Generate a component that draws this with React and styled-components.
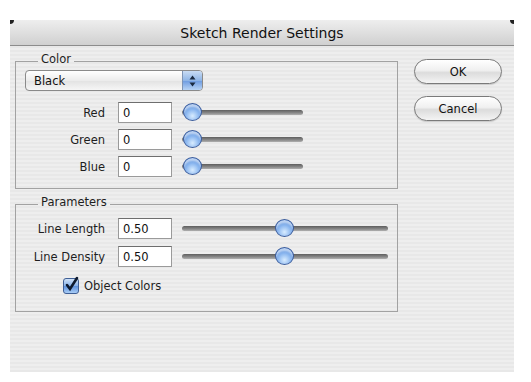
import styled, { createGlobalStyle } from 'styled-components';

const GlobalStyle = createGlobalStyle`
  body {
    margin: 0;
    background: #ffffff;
    font-family: "DejaVu Sans", "Liberation Sans", sans-serif;
  }
`;

const Page = styled.div`
  width: 531px;
  height: 382px;
  padding: 20px 0 0 10px;
  box-sizing: border-box;
`;

const Window = styled.div`
  width: 504px;
  height: 352px;
  display: flex;
  flex-direction: column;
  background: repeating-linear-gradient(
    to bottom,
    #eeeeee 0px,
    #eeeeee 2px,
    #e8e8e8 2px,
    #e8e8e8 4px
  );
`;

const TitleBar = styled.div`
  height: 25px;
  display: flex;
  align-items: center;
  justify-content: center;
  background: linear-gradient(to bottom, #eeeeee, #d0d0d0);
  border-bottom: 1px solid #8c8c8c;
  font-size: 14px;
  color: #111;
  position: relative;
`;

const Corner = styled.span`
  position: absolute;
  top: 0;
  ${(p) => (p.right ? 'right: 0;' : 'left: 0;')}
  width: 4px;
  height: 4px;
  background: #222;
  border-radius: ${(p) => (p.right ? '0 0 0 4px' : '0 0 4px 0')};
`;

const Body = styled.div`
  flex: 1;
  display: flex;
  gap: 16px;
  padding: 6px 12px 0 5px;
`;

const LeftColumn = styled.div`
  width: 384px;
  display: flex;
  flex-direction: column;
  gap: 6px;
`;

const Group = styled.fieldset`
  margin: 0;
  border: 1px solid #a2a2a2;
  padding: 0 0 0 9px;
  height: ${(p) => p.h}px;
  box-sizing: border-box;
  display: flex;
  flex-direction: column;
`;

const Legend = styled.legend`
  margin-left: 13px;
  padding: 0 3px 4px;
  font-size: 11.5px;
  color: #1e1e1e;
`;

const Popup = styled.div`
  width: 178px;
  height: 21px;
  box-sizing: border-box;
  display: flex;
  border: 1px solid #8a8a8a;
  border-radius: 4px;
  overflow: hidden;
  background: linear-gradient(to bottom, #ffffff, #ececec 50%, #e2e2e2 51%, #f6f6f6);
  font-size: 11.5px;
`;

const PopupText = styled.div`
  flex: 1;
  display: flex;
  align-items: center;
  padding-left: 8px;
  color: #111;
`;

const Stepper = styled.div`
  width: 19px;
  display: flex;
  align-items: center;
  justify-content: center;
  border-left: 1px solid #7f95b5;
  background: linear-gradient(to bottom, #c9dcf4, #8fb5e6 50%, #6c9ae0 51%, #b8d4f5);
`;

const Rows = styled.div`
  margin-top: ${(p) => p.mt}px;
  display: flex;
  flex-direction: column;
  gap: ${(p) => p.gap}px;
`;

const Row = styled.div`
  display: flex;
  align-items: center;
  height: 21px;
`;

const Label = styled.div`
  width: 80px;
  text-align: right;
  font-size: 11.5px;
  color: #1e1e1e;
  white-space: nowrap;
`;

const Field = styled.div`
  margin-left: 13px;
  width: 54px;
  height: 21px;
  box-sizing: border-box;
  border: 1px solid #9a9a9a;
  border-top-color: #6e6e6e;
  background: #fff;
  font-size: 11.5px;
  display: flex;
  align-items: center;
  padding-left: 4px;
  color: #111;
`;

const Slider = styled.div`
  margin-left: 10px;
  width: ${(p) => p.w}px;
  height: 19px;
  position: relative;
  display: flex;
  align-items: center;
`;

const Track = styled.div`
  width: 100%;
  height: 5px;
  border-radius: 3px;
  background: linear-gradient(to bottom, #5e5e5e, #8a8a8a 60%, #b0b0b0);
`;

const Thumb = styled.div`
  position: absolute;
  top: 0;
  width: 19px;
  height: 18px;
  border-radius: 50%;
  box-sizing: border-box;
  border: 1px solid #3c5d9c;
  background: radial-gradient(circle at 50% 75%, #d8ecff 0%, #8ab6ef 45%, #4f86d6 80%, #3d6fc0 100%);
  box-shadow: inset 0 3px 2px rgba(255, 255, 255, 0.6);
`;

const CheckRow = styled.div`
  margin-top: 11px;
  margin-left: 38px;
  display: flex;
  align-items: center;
  gap: 5px;
  font-size: 11.5px;
  color: #1e1e1e;
`;

const CheckBox = styled.div`
  width: 16px;
  height: 16px;
  box-sizing: border-box;
  border: 1px solid #3f5f95;
  border-radius: 3px;
  background: linear-gradient(to bottom, #cfe2f8, #86b0e8 50%, #5c90dc 51%, #a9cdf6);
  position: relative;
`;

const RightColumn = styled.div`
  padding-top: 7px;
  display: flex;
  flex-direction: column;
  gap: 12px;
`;

const Button = styled.div`
  width: 88px;
  height: 25px;
  box-sizing: border-box;
  border: 1px solid #7a7a7a;
  border-radius: 13px;
  background: linear-gradient(to bottom, #ffffff, #f0f0f0 45%, #dcdcdc 55%, #f4f4f4);
  display: flex;
  align-items: center;
  justify-content: center;
  font-size: 11.5px;
  color: #111;
  box-shadow: 0 1px 1px rgba(0, 0, 0, 0.15);
`;

const ColorRow = ({ label }) => (
  <Row>
    <Label>{label}</Label>
    <Field>0</Field>
    <Slider w={121}>
      <Track />
      <Thumb style={{ left: 1 }} />
    </Slider>
  </Row>
);

const ParamRow = ({ label, value }) => (
  <Row>
    <Label>{label}</Label>
    <Field>{value}</Field>
    <Slider w={206}>
      <Track />
      <Thumb style={{ left: 206 * value - 10 }} />
    </Slider>
  </Row>
);

const App = () => {
  return (
    <Page>
      <GlobalStyle />
      <Window>
        <TitleBar>
          <Corner />
          Sketch Render Settings
          <Corner right />
        </TitleBar>
        <Body>
          <LeftColumn>
            <Group h={137}>
              <Legend>Color</Legend>
              <Popup>
                <PopupText>Black</PopupText>
                <Stepper>
                  <svg width="7" height="12" viewBox="0 0 7 12">
                    <path d="M3.5 0.5 L6.5 4.5 L0.5 4.5 Z" fill="#1a2a40" />
                    <path d="M3.5 11.5 L6.5 7.5 L0.5 7.5 Z" fill="#1a2a40" />
                  </svg>
                </Stepper>
              </Popup>
              <Rows mt={11} gap={6}>
                <ColorRow label="Red" />
                <ColorRow label="Green" />
                <ColorRow label="Blue" />
              </Rows>
            </Group>
            <Group h={117}>
              <Legend>Parameters</Legend>
              <Rows mt={5} gap={7}>
                <ParamRow label="Line Length" value="0.50" />
                <ParamRow label="Line Density" value="0.50" />
              </Rows>
              <CheckRow>
                <CheckBox>
                  <svg width="16" height="16" viewBox="0 0 16 16" style={{ position: 'absolute', left: 0, top: -3 }}>
                    <path d="M3 9 L6 13 L13 2" stroke="#0d1a2e" strokeWidth="2.6" fill="none" strokeLinecap="round" />
                  </svg>
                </CheckBox>
                Object Colors
              </CheckRow>
            </Group>
          </LeftColumn>
          <RightColumn>
            <Button>OK</Button>
            <Button>Cancel</Button>
          </RightColumn>
        </Body>
      </Window>
    </Page>
  );
};

export default App;
